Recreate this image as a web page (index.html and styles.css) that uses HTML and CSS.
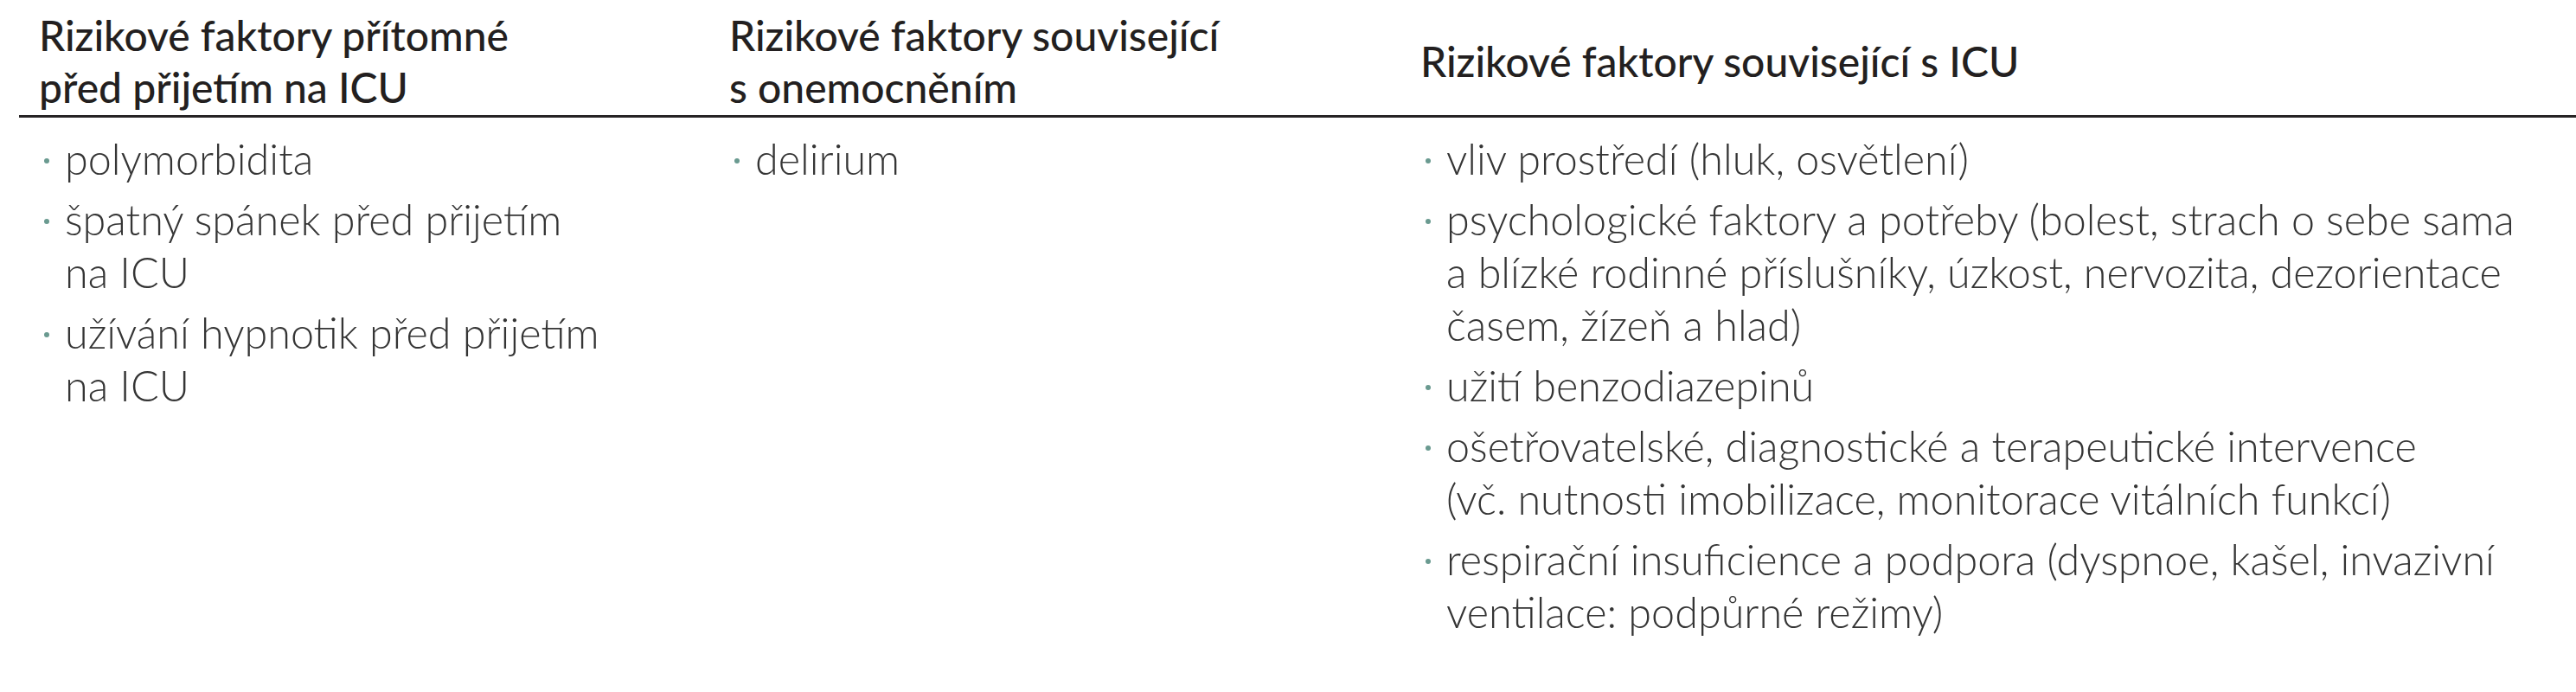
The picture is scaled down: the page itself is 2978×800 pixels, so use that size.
FILE: index.html
```html
<!DOCTYPE html>
<html lang="cs">
<head>
<meta charset="utf-8">
<title>Rizikové faktory</title>
<link rel="stylesheet" href="styles.css">
</head>
<body>
<table class="risk-table">
  <colgroup>
    <col class="col-a">
    <col class="col-b">
    <col class="col-c">
  </colgroup>
  <thead>
    <tr>
      <th>Rizikové faktory přítomné<br>před přijetím na ICU</th>
      <th>Rizikové faktory související<br>s onemocněním</th>
      <th>Rizikové faktory související s ICU</th>
    </tr>
  </thead>
  <tbody>
    <tr>
      <td>
        <ul class="bullets">
          <li><span>polymorbidita</span></li>
          <li><span>špatný spánek před přijetím<br>na ICU</span></li>
          <li><span>užívání hypnotik před přijetím<br>na ICU</span></li>
        </ul>
      </td>
      <td>
        <ul class="bullets">
          <li><span>delirium</span></li>
        </ul>
      </td>
      <td>
        <ul class="bullets">
          <li><span>vliv prostředí (hluk, osvětlení)</span></li>
          <li><span>psychologické faktory a potřeby (bolest, strach o sebe sama<br>a blízké rodinné příslušníky, úzkost, nervozita, dezorientace<br>časem, žízeň a hlad)</span></li>
          <li><span>užití benzodiazepinů</span></li>
          <li><span>ošetřovatelské, diagnostické a terapeutické intervence<br>(vč. nutnosti imobilizace, monitorace vitálních funkcí)</span></li>
          <li><span>respirační insuficience a podpora (dyspnoe, kašel, invazivní<br>ventilace: podpůrné režimy)</span></li>
        </ul>
      </td>
    </tr>
  </tbody>
</table>
</body>
</html>
```
FILE: styles.css
```css
html, body {
  margin: 0;
  padding: 0;
  background: #ffffff;
}

body {
  font-family: "Lato", "Open Sans", "Liberation Sans", sans-serif;
  font-size: 48px;
  color: #353535;
}

.risk-table {
  margin-left: 22px;
  width: calc(100% - 22px);
  border-collapse: separate;
  border-spacing: 0;
  table-layout: fixed;
}

.col-a { width: 798px; }
.col-b { width: 799px; }

.risk-table th {
  text-align: left;
  vertical-align: middle;
  font-weight: 500;
  color: #231f20;
  line-height: 60px;
  padding: 11px 0 2px 23px;
  border-bottom: 3px solid #262324;
  white-space: nowrap;
}

.risk-table td {
  vertical-align: top;
  padding: 17px 0 0 23px;
  font-weight: 300;
  font-size: 48.5px;
}

.bullets {
  list-style: none;
  margin: 0;
  padding: 0;
}

.bullets li {
  display: grid;
  grid-template-columns: 30px 1fr;
  line-height: 61px;
  margin-bottom: 9px;
  white-space: nowrap;
}

.bullets li:last-child {
  margin-bottom: 0;
}

.bullets li::before {
  content: "";
  width: 6px;
  height: 6px;
  border-radius: 50%;
  background: #6a9a90;
  margin: 30px 0 0 6px;
}
```
